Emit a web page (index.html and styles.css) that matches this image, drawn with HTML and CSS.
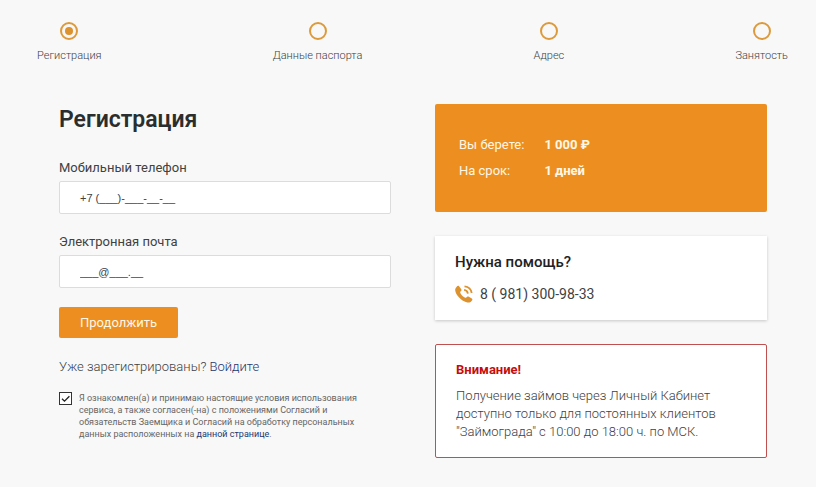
FILE: index.html
```html
<!DOCTYPE html>
<html lang="ru">
<head>
<meta charset="utf-8">
<meta name="viewport" content="width=device-width, initial-scale=1">
<title>Регистрация</title>
<link rel="stylesheet" href="styles.css">
</head>
<body>
<ol class="steps">
  <li class="step step--active" aria-current="step"><span class="step__dot"></span>Регистрация</li>
  <li class="step"><span class="step__dot"></span>Данные паспорта</li>
  <li class="step"><span class="step__dot"></span>Адрес</li>
  <li class="step"><span class="step__dot"></span>Занятость</li>
</ol>
<main class="content">
  <form class="form">
    <h1 class="form__title">Регистрация</h1>
    <div class="field">
      <label class="field__label" for="phone">Мобильный телефон</label>
      <input class="field__input" id="phone" type="tel" value="+7 (___)-___-__-__">
    </div>
    <div class="field">
      <label class="field__label" for="email">Электронная почта</label>
      <input class="field__input" id="email" type="text" value="___@___.__">
    </div>
    <button class="button" type="button">Продолжить</button>
    <p class="login">Уже зарегистрированы? <a class="login__link" href="#">Войдите</a></p>
    <div class="consent">
      <input class="consent__box" id="consent" type="checkbox" checked>
      <label class="consent__text" for="consent">Я ознакомлен(а) и принимаю настоящие условия использования сервиса, а также согласен(-на) с положениями Согласий и обязательств Заемщика и Согласий на обработку персональных данных расположенных на <a class="consent__link" href="#">данной странице</a>.</label>
      <svg class="consent__tick" viewBox="0 0 13 13" aria-hidden="true"><path d="M3 6.700l2.500 2.500L10.400 4.200"/></svg>
    </div>
  </form>
  <aside class="side">
    <dl class="loan">
      <dt class="loan__name">Вы берете:</dt><dd class="loan__value">1 000 ₽</dd>
      <dt class="loan__name">На срок:</dt><dd class="loan__value">1 дней</dd>
    </dl>
    <section class="help">
      <h2 class="help__title">Нужна помощь?</h2>
      <p class="help__phone">
        <svg class="help__icon" viewBox="0 0 18 18" aria-hidden="true">
          <path class="help__handset" d="M1.300 2.200C2.200 1 3.200.5 3.900 1.100L6.300 4.300C6.900 5.200 6.400 5.900 5.500 6.600C4.900 7.200 5.200 7.900 5.900 9C7 10.700 8.500 12 10.100 12.700C10.900 13 11.400 12.600 11.900 12C12.500 11.400 13.200 11.400 13.900 11.800L16.800 13.500C17.600 14 17.500 14.700 17 15.600C16.100 17.200 14.500 17.900 12.400 17.500C6.300 16.200.500 9.700.200 5.200C.100 4 .500 3.100 1.300 2.200Z"/>
          <path class="help__wave" d="M9.100 4.900Q12.200 5.200 12.900 8.600M9.500 1.300Q15.800 2 16.700 8"/>
        </svg>
        8 ( 981) 300-98-33
      </p>
    </section>
    <section class="notice">
      <h2 class="notice__title">Внимание!</h2>
      <p class="notice__text">Получение займов через Личный Кабинет доступно только для постоянных клиентов "Займограда" с 10:00 до 18:00 ч. по МСК.</p>
    </section>
  </aside>
</main>
</body>
</html>
```
FILE: styles.css
```css
* {
  box-sizing: border-box;
}

body {
  margin: 0;
  background: #f8f8f8;
  color: #404142;
  font: 13px/18px Roboto, "Liberation Sans", sans-serif;
}

h1, h2, p, ol, dl, dd {
  margin: 0;
  padding: 0;
}

a {
  color: #24376e;
  text-decoration: none;
}

.steps {
  display: flex;
  justify-content: space-between;
  padding: 22px 28px 0 37px;
  list-style: none;
}

.step {
  display: flex;
  flex-direction: column;
  align-items: center;
  gap: 8px;
  font-size: 11px;
  line-height: 16px;
  font-weight: 300;
}

.step__dot {
  display: grid;
  place-items: center;
  width: 18px;
  height: 18px;
  border: 2px solid #dc9a3c;
  border-radius: 50%;
}

.step--active .step__dot::before {
  content: "";
  width: 8px;
  height: 8px;
  border-radius: 50%;
  background: #dc922e;
}

.content {
  display: grid;
  grid-template-columns: 1fr 1fr;
  gap: 44px;
  padding: 40px 49px 28px 59px;
}

.form__title {
  margin-bottom: 23px;
  font-size: 23px;
  line-height: 32px;
  font-weight: 600;
  color: #2b2e2f;
}

.field {
  margin-bottom: 19px;
}

.field__label {
  display: block;
  margin-bottom: 4px;
}

.field__input {
  display: block;
  width: 100%;
  height: 33px;
  padding: 0 20px;
  border: 1px solid #dcdcdc;
  border-radius: 2px;
  background: #fff;
  color: #404142;
  font: 11px "Liberation Sans", sans-serif;
}

.button {
  height: 31px;
  padding: 0 21px;
  border: 0;
  border-radius: 2px;
  background: #ec8f20;
  color: #fff8e6;
  font: 13px Roboto, "Liberation Sans", sans-serif;
}

.login {
  margin-top: 20px;
  font-weight: 300;
}

.consent {
  display: grid;
  grid-template-columns: 13px 1fr;
  gap: 7px;
  margin-top: 16px;
  padding-right: 32px;
}

.consent__box {
  grid-area: 1 / 1;
  appearance: none;
  width: 13px;
  height: 13px;
  margin: 0;
  border: 1px solid #333;
  background: #fff;
}

.consent__tick {
  grid-area: 1 / 1;
  width: 13px;
  height: 13px;
  fill: none;
  stroke: #222;
  stroke-width: 1.3;
  pointer-events: none;
}

.consent__text {
  grid-area: 1 / 2;
  font-size: 9px;
  line-height: 12px;
  color: #666;
}

.side {
  display: flex;
  flex-direction: column;
  gap: 24px;
}

.loan {
  display: grid;
  grid-template-columns: max-content 1fr;
  gap: 8px 20px;
  padding: 32px 24px;
  border-radius: 2px;
  background: #ec8f20;
  color: #fff8e6;
}

.loan__value {
  font-weight: 700;
}

.help {
  padding: 16px 20px;
  background: #fff;
  box-shadow: 0 1px 3px rgba(0, 0, 0, 0.2);
}

.help__title {
  margin-bottom: 12px;
  font-size: 15px;
  line-height: 20px;
  font-weight: 500;
  color: #222;
}

.help__phone {
  display: flex;
  align-items: center;
  gap: 7px;
  font-size: 14px;
  line-height: 20px;
}

.help__icon {
  width: 18px;
  height: 18px;
}

.help__handset {
  fill: #dc922e;
}

.help__wave {
  fill: none;
  stroke: #dc922e;
  stroke-width: 1.8;
}

.notice {
  padding: 17px 20px 16px;
  border: 1px solid #c0504f;
  border-radius: 2px;
  background: #fff;
}

.notice__title {
  margin-bottom: 9px;
  font-size: 13px;
  line-height: 16px;
  font-weight: 700;
  color: #c40d0d;
}

.notice__text {
  font-weight: 300;
}
```
